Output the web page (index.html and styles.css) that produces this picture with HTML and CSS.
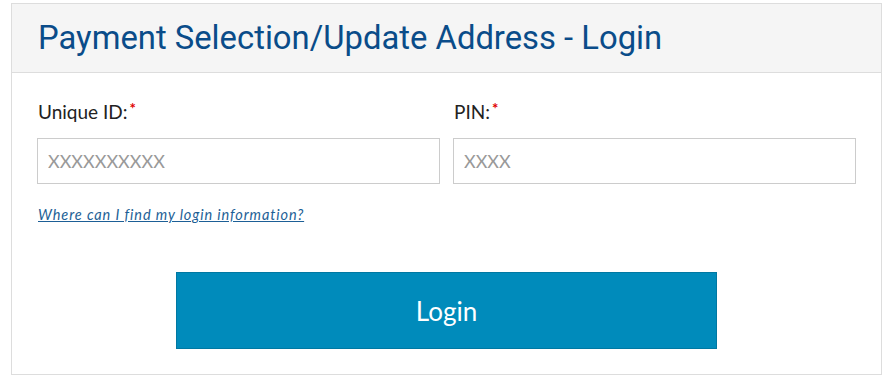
FILE: index.html
```html
<!DOCTYPE html>
<html lang="en">
<head>
<meta charset="utf-8">
<title>Payment Selection/Update Address - Login</title>
<link rel="stylesheet" href="styles.css">
</head>
<body>
<div class="card">
  <div class="card-header">
    <h1 class="title">Payment Selection/Update Address - Login</h1>
  </div>
  <form class="card-body">
    <div class="fields">
      <div class="field">
        <label class="label" for="uid">Unique ID:<span class="req">*</span></label>
        <input class="input" id="uid" type="text" placeholder="XXXXXXXXXX">
      </div>
      <div class="field">
        <label class="label" for="pin">PIN:<span class="req">*</span></label>
        <input class="input" id="pin" type="text" placeholder="XXXX">
      </div>
    </div>
    <a class="help" href="#">Where can I find my login information?</a>
    <button class="btn" type="button">Login</button>
  </form>
</div>
</body>
</html>
```

FILE: styles.css
```css
html, body {
  margin: 0;
  padding: 0;
  background: #ffffff;
}
body {
  padding: 3px 11px 0 11px;
  font-family: Lato, "Open Sans", "Liberation Sans", sans-serif;
}
.card {
  border: 1px solid #dddddd;
  background: #ffffff;
}
.card-header {
  height: 68px;
  padding: 0 26px;
  background: #f5f5f5;
  border-bottom: 1px solid #dddddd;
  display: flex;
  align-items: center;
}
.title {
  margin: 0;
  font-family: Roboto, "Liberation Sans", sans-serif;
  font-weight: 400;
  font-size: 32.8px;
  color: #0a4c89;
}
.card-body {
  padding: 26px 25px 25px 25px;
  display: flex;
  flex-direction: column;
}
.fields {
  display: grid;
  grid-template-columns: 1fr 1fr;
  column-gap: 13px;
}
.field {
  display: flex;
  flex-direction: column;
}
.label {
  font-size: 19px;
  line-height: 26px;
  color: #222222;
  margin-bottom: 13px;
  padding-left: 1px;
}
.req {
  color: #e00000;
  font-size: 15px;
  font-weight: 700;
  vertical-align: top;
  line-height: 18px;
  margin-left: 2px;
}
.input {
  box-sizing: border-box;
  height: 46px;
  border: 1px solid #cccccc;
  padding: 0 10px;
  font-family: Lato, "Open Sans", sans-serif;
  font-size: 18px;
  color: #333333;
  outline: none;
}
.input::placeholder {
  color: #999999;
}
.help {
  align-self: flex-start;
  margin-top: 21px;
  padding-left: 1px;
  font-size: 14.5px;
  line-height: 20px;
  letter-spacing: 0.9px;
  font-style: italic;
  color: #1d5f96;
  text-decoration: underline;
}
.btn {
  align-self: center;
  margin-top: 47px;
  width: 541px;
  height: 77px;
  background: #008bbb;
  border: 1px solid #0078a2;
  color: #ffffff;
  font-family: Lato, "Open Sans", sans-serif;
  font-size: 26px;
  cursor: pointer;
}
```
